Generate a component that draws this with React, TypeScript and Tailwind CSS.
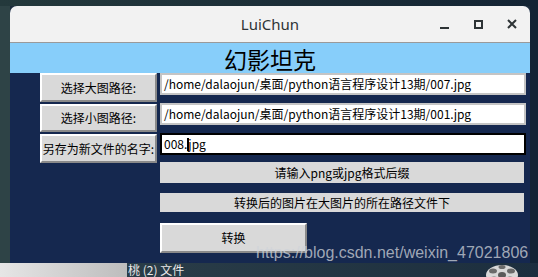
import React from "react";

const cjk = { fontFamily: '"Noto Sans CJK SC", "Noto Sans", sans-serif' };

function TkButton({ children, className = "" }: { children: React.ReactNode; className?: string }) {
  return (
    <div
      className={`flex items-center justify-center bg-[#d9d9d9] border-2 border-t-[#ffffff] border-l-[#ffffff] border-r-[#8a8a8a] border-b-[#8a8a8a] text-[12px] text-black leading-none ${className}`}
      style={cjk}
    >
      {children}
    </div>
  );
}

function Entry({ children, focused = false }: { children: React.ReactNode; focused?: boolean }) {
  return (
    <div
      className={`h-[22px] w-[366px] bg-white flex items-center pl-[2px] text-[12px] text-black leading-none whitespace-nowrap ${
        focused ? "border-2 border-black" : "border-2 border-[#c4c4c4]"
      }`}
      style={cjk}
    >
      {children}
    </div>
  );
}

export default function App() {
  return (
    <div className="relative w-[538px] h-[277px] overflow-hidden bg-[#1c2c3c]">
      {/* desktop background left */}
      <div className="absolute left-0 top-0 w-[10px] h-[263px] bg-[#2e4346]" />
      <div className="absolute left-0 top-0 w-[538px] h-[6px] bg-gradient-to-r from-[#24393c] to-[#142434]" />
      <div className="absolute right-0 top-0 w-[8px] h-[263px] bg-[#132434]" />
      {/* bottom strip */}
      <div className="absolute left-0 top-[263px] w-[127px] h-[14px] bg-gradient-to-r from-[#e6e6e6] to-[#bdbdbd]" />
      <div className="absolute left-[127px] top-[263px] w-[411px] h-[14px] bg-gradient-to-r from-[#2a3d48] to-[#1c2e3e]" />
      <div className="absolute left-[128px] top-[264px] text-[12px] text-[#e8e8e8] leading-none whitespace-nowrap" style={cjk}>
        桃 (2) 文件
      </div>
      {/* film reel icon */}
      <svg className="absolute left-[484px] top-[261px]" width="36" height="24" viewBox="0 0 36 24">
        <ellipse cx="18" cy="14" rx="16" ry="10" fill="#d8d8d8" />
        <ellipse cx="18" cy="14" rx="4" ry="3" fill="#5a5a5a" />
        <ellipse cx="9" cy="10" rx="4" ry="2.5" fill="#6a6a6a" />
        <ellipse cx="27" cy="10" rx="4" ry="2.5" fill="#6a6a6a" />
        <ellipse cx="18" cy="6" rx="3.5" ry="2" fill="#6a6a6a" />
        <ellipse cx="10" cy="18" rx="4" ry="2.5" fill="#6a6a6a" />
        <ellipse cx="26" cy="18" rx="4" ry="2.5" fill="#6a6a6a" />
      </svg>

      {/* window */}
      <div className="absolute left-[10px] top-[6px] w-[520px] h-[257px] flex flex-col rounded-t-[7px] overflow-hidden bg-[#15284f]">
        {/* title bar */}
        <div className="relative h-[37px] shrink-0 bg-[#f2f2f2] border-b border-[#9a9a9a] flex items-center justify-center">
          <span className="text-[15px] text-[#2e3436]" style={{ fontFamily: '"Noto Sans", sans-serif' }}>
            LuiChun
          </span>
          <div className="absolute right-0 top-0 h-full flex items-center">
            <div className="w-[34px] flex justify-center">
              <div className="w-[9px] h-[2px] bg-[#2e3436] mt-[7px]" />
            </div>
            <div className="w-[34px] flex justify-center">
              <div className="w-[9px] h-[9px] border-2 border-[#2e3436]" />
            </div>
            <div className="w-[34px] flex justify-center mr-[1px]">
              <svg width="10" height="10" viewBox="0 0 10 10">
                <path d="M1 1 L9 9 M9 1 L1 9" stroke="#2e3436" strokeWidth="2" />
              </svg>
            </div>
          </div>
        </div>
        {/* header */}
        <div className="h-[30px] shrink-0 bg-[#87cefa] flex items-center justify-center">
          <span className="text-[23px] text-black leading-none mt-[2px]" style={cjk}>
            幻影坦克
          </span>
        </div>
        {/* content */}
        <div className="flex flex-col pl-[30px]">
          <div className="flex gap-[3px]">
            <TkButton className="w-[117px] h-[29px]">选择大图路径:</TkButton>
            <Entry>/home/dalaojun/桌面/python语言程序设计13期/007.jpg</Entry>
          </div>
          <div className="flex gap-[3px] mt-[2px]">
            <TkButton className="w-[117px] h-[28px]">选择小图路径:</TkButton>
            <div className="-mt-[1px]">
              <Entry>/home/dalaojun/桌面/python语言程序设计13期/001.jpg</Entry>
            </div>
          </div>
          <div className="flex gap-[3px] mt-[2px]">
            <TkButton className="w-[117px] h-[29px]">另存为新文件的名字:</TkButton>
            <div className="-mt-[1px]">
              <Entry focused>
                008.
                <span className="inline-block w-[2px] h-[13px] bg-black -mr-[1px]" />
                jpg
              </Entry>
            </div>
          </div>
          <div className="pl-[120px] flex flex-col">
            <div
              className="-mt-[1px] w-[364px] h-[21px] bg-[#d9d9d9] flex items-center justify-center text-[12px] text-black leading-none"
              style={cjk}
            >
              请输入png或jpg格式后缀
            </div>
            <div
              className="mt-[10px] w-[364px] h-[19px] bg-[#d9d9d9] flex items-center justify-center text-[12px] text-black leading-none"
              style={cjk}
            >
              转换后的图片在大图片的所在路径文件下
            </div>
            <TkButton className="mt-[11px] w-[147px] h-[30px]">转换</TkButton>
          </div>
        </div>
      </div>

      {/* watermark */}
      <div
        className="absolute left-[256px] top-[245px] text-[16px] text-[#cfd3da]/75 leading-none whitespace-nowrap"
        style={{ fontFamily: '"Liberation Sans", Arial, sans-serif' }}
      >
        https://blog.csdn.net/weixin_47021806
      </div>
    </div>
  );
}
